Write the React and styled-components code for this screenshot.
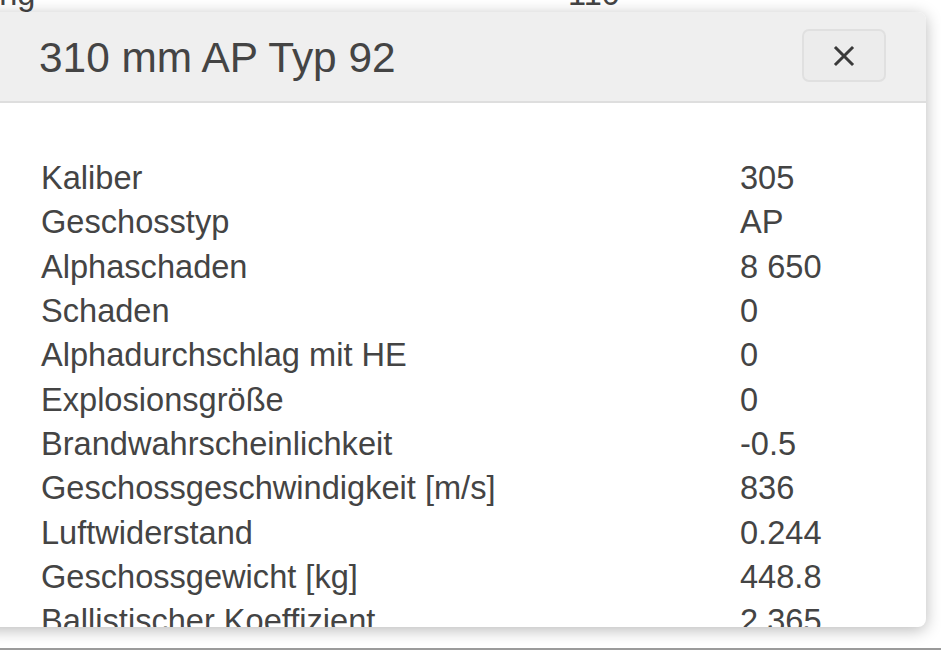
import React from "react";
import styled, { createGlobalStyle } from "styled-components";

const GlobalStyle = createGlobalStyle`
  html, body {
    margin: 0;
    padding: 0;
    background: #ffffff;
    overflow: hidden;
  }
  body {
    font-family: "Liberation Sans", Arial, Helvetica, sans-serif;
    color: #444;
  }
`;

const rows = [
  ["Kaliber", "305"],
  ["Geschosstyp", "AP"],
  ["Alphaschaden", "8 650"],
  ["Schaden", "0"],
  ["Alphadurchschlag mit HE", "0"],
  ["Explosionsgröße", "0"],
  ["Brandwahrscheinlichkeit", "-0.5"],
  ["Geschossgeschwindigkeit [m/s]", "836"],
  ["Luftwiderstand", "0.244"],
  ["Geschossgewicht [kg]", "448.8"],
  ["Ballistischer Koeffizient", "2.365"],
];

function App() {
  return (
    <Page>
      <GlobalStyle />
      <Backdrop>
        <BackRow>
          <BackCell $width="641px">Ladung</BackCell>
          <BackCell>110</BackCell>
        </BackRow>
      </Backdrop>

      <Modal>
        <Header>
          <Title>310 mm AP Typ 92</Title>
          <CloseButton aria-label="Schließen">
            <svg width="22" height="22" viewBox="0 0 22 22">
              <path
                d="M3 3 L19 19 M19 3 L3 19"
                stroke="#3a3a3a"
                strokeWidth="3"
                strokeLinecap="square"
              />
            </svg>
          </CloseButton>
        </Header>
        <Body>
          <Table>
            {rows.map(([label, value]) => (
              <Row key={label}>
                <Label>{label}</Label>
                <Value>{value}</Value>
              </Row>
            ))}
          </Table>
        </Body>
      </Modal>

      <BottomBar />
    </Page>
  );
}

const Page = styled.div`
  position: relative;
  width: 941px;
  height: 652px;
  overflow: hidden;
  background: #fff;
`;

const Backdrop = styled.div`
  margin-top: -24px;
`;

const BackRow = styled.div`
  display: flex;
  margin-left: -73px;
  font-size: 32.5px;
  line-height: 36px;
  color: #444;
`;

const BackCell = styled.div`
  width: ${(p) => p.$width || "auto"};
  flex-shrink: 0;
`;

const Modal = styled.div`
  position: absolute;
  top: 12px;
  left: -20px;
  width: 946px;
  height: 615px;
  background: #fff;
  border-radius: 8px;
  box-shadow: 0 3px 16px rgba(0, 0, 0, 0.28);
  overflow: hidden;
  display: flex;
  flex-direction: column;
`;

const Header = styled.div`
  display: flex;
  align-items: center;
  justify-content: space-between;
  height: 91px;
  box-sizing: border-box;
  padding: 0 40px 0 59px;
  background: #efefef;
  border-bottom: 2px solid #dedede;
  flex-shrink: 0;
`;

const Title = styled.h4`
  margin: 0;
  margin-top: 2px;
  font-size: 42.4px;
  font-weight: 400;
  color: #444;
`;

const CloseButton = styled.button`
  width: 84px;
  height: 53px;
  margin-top: -2px;
  display: flex;
  align-items: center;
  justify-content: center;
  background: #ececec;
  border: 2px solid #e0e0e0;
  border-radius: 7px;
  padding: 0;
  cursor: pointer;
`;

const Body = styled.div`
  flex: 1;
  overflow: hidden;
  padding: 53px 0 0 61px;
`;

const Table = styled.div`
  display: flex;
  flex-direction: column;
`;

const Row = styled.div`
  display: grid;
  grid-template-columns: 699px 1fr;
  height: 44.3px;
  align-items: center;
  font-size: 32.6px;
  color: #444;
`;

const Label = styled.span`
  white-space: nowrap;
`;

const Value = styled.span`
  white-space: nowrap;
`;

const BottomBar = styled.div`
  position: absolute;
  left: 0;
  right: 0;
  top: 648px;
  height: 2px;
  background: #9a9a9a;
`;

export default App;
